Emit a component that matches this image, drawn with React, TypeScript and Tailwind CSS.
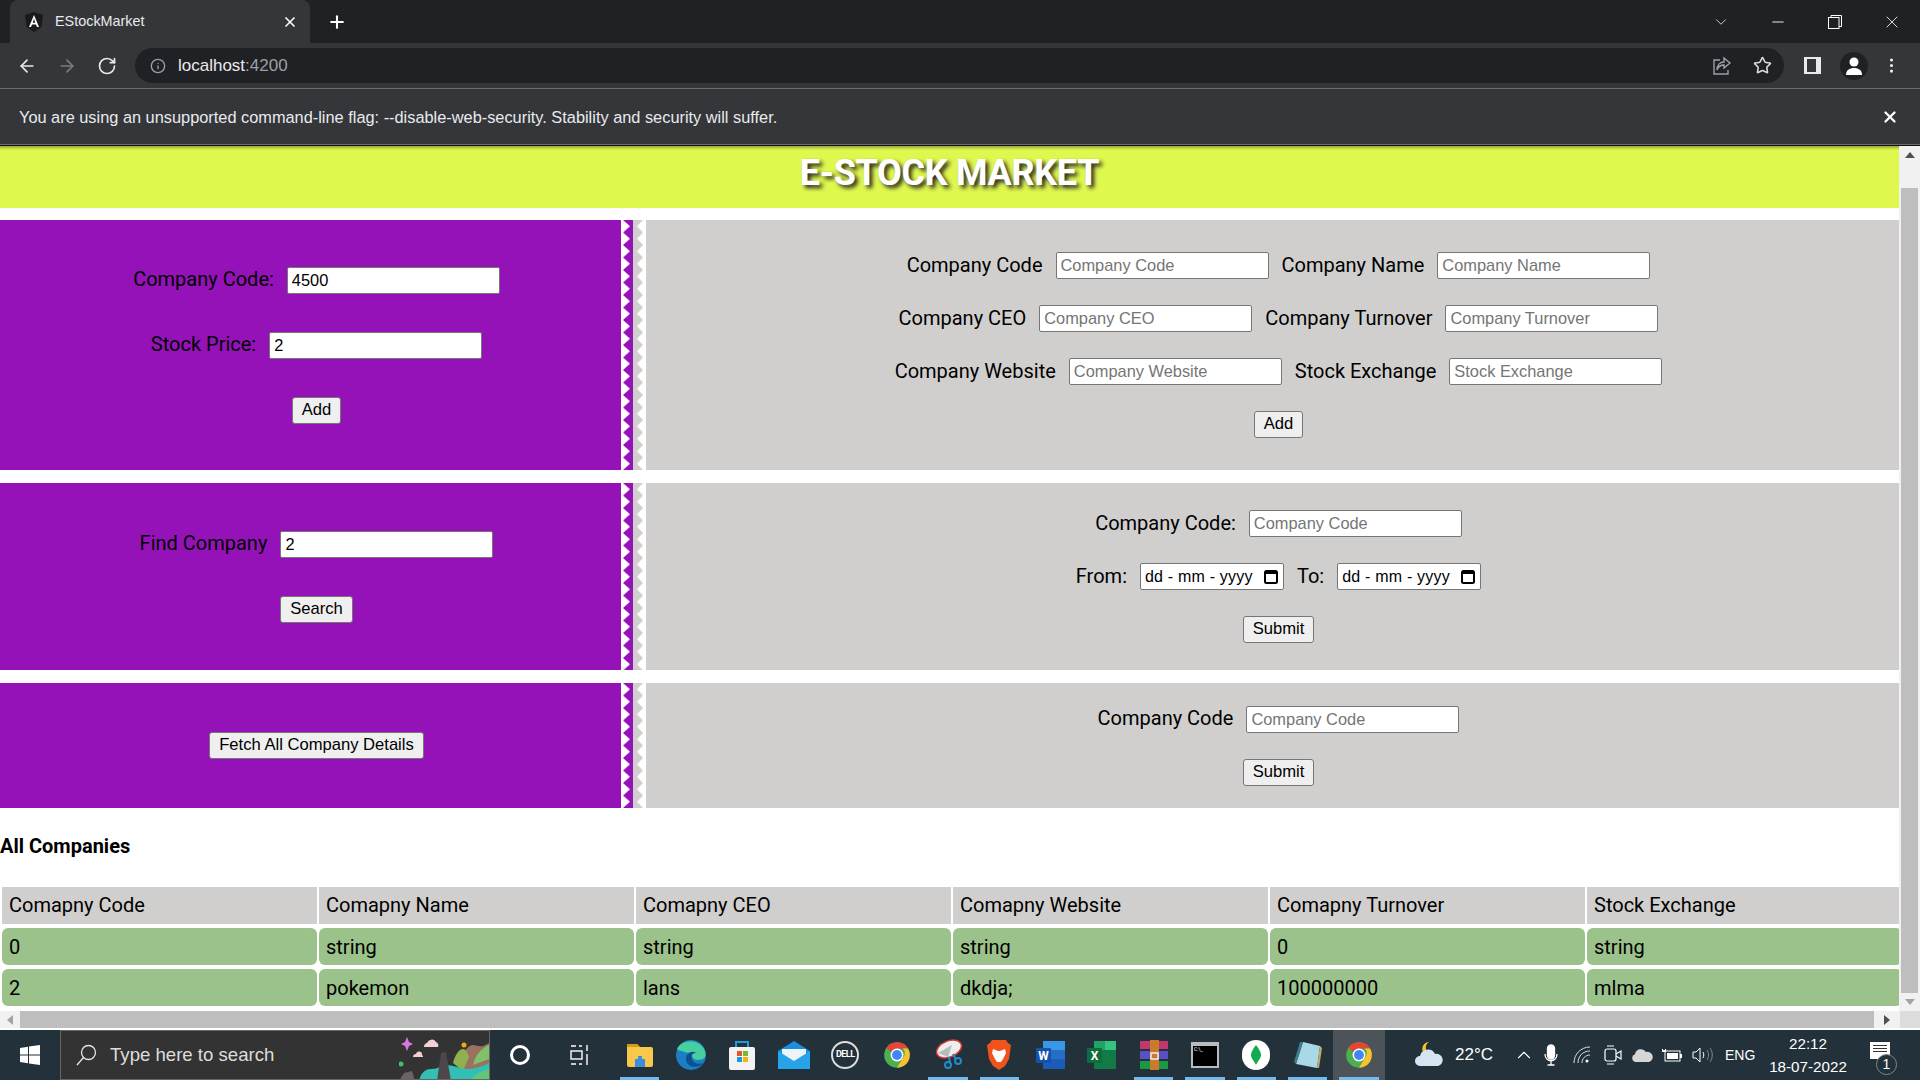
import { ReactNode } from "react";
import { ArrowLeft, ArrowRight, RotateCw, Info, Star, MoreVertical, X, Plus, ChevronDown, ChevronUp, Minus } from "lucide-react";

const sans = "font-['Liberation_Sans',sans-serif]";

const Label = ({ children }: { children: ReactNode }) => (
  <span className="text-[20px] leading-[26px] pb-[2px] text-black whitespace-nowrap">{children}</span>
);

const Field = ({ value, placeholder }: { value?: string; placeholder?: string }) => (
  <input
    readOnly
    value={value ?? ""}
    placeholder={placeholder}
    className={`${sans} w-[213px] h-[27px] bg-white border border-[#767676] rounded-[2px] px-[4px] text-[16.4px] text-black placeholder:text-[#757575] outline-none`}
  />
);

const Btn = ({ children }: { children: ReactNode }) => (
  <button className={`${sans} h-[27px] px-[9px] bg-[#efefef] border border-[#767676] rounded-[3px] text-[16.6px] text-black leading-none`}>
    {children}
  </button>
);

const DateField = () => (
  <div className={`${sans} w-[144px] h-[27px] bg-white border border-[#767676] rounded-[2px] pl-[4px] pr-[5px] flex items-center justify-between text-[16px] text-black`}>
    <span className="whitespace-pre tracking-[0.2px]">dd - mm - yyyy</span>
    <svg width="14" height="15" viewBox="0 0 14 15" fill="none">
      <rect x="1" y="2" width="12" height="12" rx="1.5" stroke="#000" strokeWidth="2" />
      <rect x="1" y="2" width="12" height="3" fill="#000" />
    </svg>
  </div>
);

const Row = ({ children }: { children: ReactNode }) => (
  <div className="flex items-center justify-center gap-[13px] h-[27px]">{children}</div>
);

// the purple / grey saw tooth strip between the two halves of a section
const Zigzag = () => (
  <svg className="w-[25px] h-full shrink-0 block" width="25" height="100%">
    <defs>
      <pattern id="saw" width="25" height="12.5" patternUnits="userSpaceOnUse">
        <polygon points="2,0 9,6.25 2,12.5 12,12.5 12,0" fill="#9512b8" />
        <polygon points="12,0 22,0 16,6.25 22,12.5 12,12.5" fill="#d0cfcd" />
      </pattern>
    </defs>
    <rect width="25" height="100%" fill="url(#saw)" />
  </svg>
);

const Section = ({ height, left, right }: { height: string; left: ReactNode; right: ReactNode }) => (
  <div className={`flex ${height}`}>
    <div className="w-[621px] bg-[#9512b8] pl-[12px] flex flex-col items-center justify-center gap-[38px]">{left}</div>
    <Zigzag />
    <div className="flex-1 bg-[#d0cfcd] pl-[12px] flex flex-col items-center justify-center gap-[26px]">{right}</div>
  </div>
);

const columns = ["Comapny Code", "Comapny Name", "Comapny CEO", "Comapny Website", "Comapny Turnover", "Stock Exchange"];
const rows = [
  ["0", "string", "string", "string", "0", "string"],
  ["2", "pokemon", "lans", "dkdja;", "100000000", "mlma"],
];

const Tray = ({ x, children }: { x: string; children: ReactNode }) => (
  <div className={`flex items-center justify-center h-full ${x}`}>{children}</div>
);

const TaskIcon = ({ children, open, active }: { children: ReactNode; open?: boolean; active?: boolean }) => (
  <div className={`relative w-[51.4px] shrink-0 h-full flex items-center justify-center ${active ? "bg-[#4d5459]" : ""}`}>
    {children}
    {open && <div className="absolute bottom-0 left-[6px] right-[6px] h-[3px] bg-[#76b9ed]" />}
  </div>
);

const Chrome = () => (
  <svg width="28" height="28" viewBox="0 0 48 48">
    <circle cx="24" cy="24" r="22" fill="#4caf50" />
    <path d="M24 2a22 22 0 0 1 19 11H24a11 11 0 0 0-10 6L6 12A22 22 0 0 1 24 2z" fill="#ea4335" />
    <path d="M43 13a22 22 0 0 1-19 33l10-17a11 11 0 0 0 0-16z" fill="#fbc02d" />
    <circle cx="24" cy="24" r="11" fill="#fff" />
    <circle cx="24" cy="24" r="8.5" fill="#4285f4" />
  </svg>
);

export default function App() {
  return (
    <div className="w-[1920px] h-screen overflow-hidden flex flex-col bg-white font-[Roboto,sans-serif]">
      {/* tab strip */}
      <div className="h-[43px] bg-[#202124] flex items-end text-white shrink-0">
        <div className="ml-[10px] w-[300px] h-[43px] bg-[#35363a] rounded-t-[8px] flex items-center pl-[15px] pr-[12px]">
          <svg width="18" height="20" viewBox="0 0 18 20" className="shrink-0">
            <path d="M9 0 L18 3 L16.5 15 L9 20 L1.5 15 L0 3 Z" fill="#1a1a1e" />
            <path d="M9 3 L14 15 H12 L11 12.5 H7 L6 15 H4 Z M9 7 L7.7 10.8 H10.3 Z" fill="#fff" />
          </svg>
          <span className={`${sans} ml-[12px] text-[14.4px] text-[#e8eaed] flex-1`}>EStockMarket</span>
          <X size={16} strokeWidth={2.5} />
        </div>
        <div className="h-[43px] flex items-center ml-[17px]">
          <Plus size={20} strokeWidth={2.5} />
        </div>
        <div className="flex-1" />
        <div className="h-[43px] flex items-center">
          <div className="w-[57px] flex justify-center"><ChevronDown size={18} strokeWidth={1} /></div>
          <div className="w-[57px] flex justify-center"><Minus size={18} strokeWidth={1.2} /></div>
          <div className="w-[57px] flex justify-center">
            <svg width="14" height="14" viewBox="0 0 14 14" fill="none" stroke="#fff">
              <rect x="0.5" y="2.5" width="10.5" height="11" />
              <path d="M3 2.5V.5h10.5v11H11" />
            </svg>
          </div>
          <div className="w-[57px] flex justify-center"><X size={20} strokeWidth={1} /></div>
        </div>
      </div>

      {/* toolbar */}
      <div className="h-[46px] bg-[#35363a] flex items-center border-b border-[#6b6c70] text-white shrink-0">
        <div className="w-[135px] flex items-center pl-[17px] gap-[20px]">
          <ArrowLeft size={20} className="text-[#e8eaed]" />
          <ArrowRight size={20} className="text-[#7a7c80]" />
          <RotateCw size={20} className="text-[#e8eaed]" />
        </div>
        <div className="w-[1649px] h-[35px] rounded-full bg-[#202124] flex items-center pl-[15px] pr-[12px]">
          <Info size={16} className="text-[#9aa0a6]" />
          <span className={`${sans} ml-[12px] text-[17px]`}>
            <span className="text-[#e8eaed]">localhost</span>
            <span className="text-[#9aa0a6]">:4200</span>
          </span>
          <div className="flex-1" />
          <svg width="20" height="20" viewBox="0 0 20 20" fill="none" stroke="#9aa0a6" strokeWidth="1.4" className="mr-[21px]">
            <path d="M8 4H2v14h14v-4" />
            <path d="M12 2l6 5-6 5V9c-4 0-6 2-7 5 0-5 3-8 7-8z" />
          </svg>
          <Star size={19} className="text-[#dadce0]" />
        </div>
        <div className="flex-1 flex items-center pl-[20px]">
          <div className="w-[17px] h-[17px] border-[2px] border-l-[3px] border-r-[5px] border-[#e8eaed]" />
          <div className="ml-[19px] w-[28px] h-[28px] rounded-full bg-[#202124] flex items-center justify-center">
            <svg width="18" height="20" viewBox="0 0 18 20" fill="#fff">
              <circle cx="9" cy="6" r="4.5" />
              <path d="M1 19c0-5 3.5-7 8-7s8 2 8 7z" />
            </svg>
          </div>
          <MoreVertical size={19} className="text-[#e8eaed] ml-[14px]" />
        </div>
      </div>

      {/* infobar */}
      <div className="h-[56px] bg-[#35363a] border-b border-[#6b6c70] flex items-center justify-between pl-[19px] pr-[21px] text-white shrink-0">
        <span className={`${sans} pt-[2px] text-[16.35px] text-[#e8eaed]`}>
          You are using an unsupported command-line flag: --disable-web-security. Stability and security will suffer.
        </span>
        <X size={18} strokeWidth={3} />
      </div>

      {/* page */}
      <div className="flex-1 min-h-0 flex flex-col border-t border-[#111]">
        <div className="flex-1 min-h-0 flex">
          <div className="w-[1899px] flex flex-col overflow-hidden">
            <div className="h-[62px] shrink-0 bg-[#e0f84e] shadow-[inset_0_5px_3px_-3px_#9aa83a] flex items-center justify-center -mb-[1px]">
              <h1 className="text-[36px] font-bold text-white [text-shadow:3px_3px_4px_#222] -mt-[9px] tracking-[-0.3px]">E-STOCK MARKET</h1>
            </div>
            <div className="mt-[13px] flex flex-col gap-[13px]">
              <Section
                height="h-[250px]"
                left={
                  <>
                    <Row><Label>Company Code:</Label><Field value="4500" /></Row>
                    <Row><Label>Stock Price:</Label><Field value="2" /></Row>
                    <Btn>Add</Btn>
                  </>
                }
                right={
                  <>
                    <Row>
                      <Label>Company Code</Label><Field placeholder="Company Code" />
                      <Label>Company Name</Label><Field placeholder="Company Name" />
                    </Row>
                    <Row>
                      <Label>Company CEO</Label><Field placeholder="Company CEO" />
                      <Label>Company Turnover</Label><Field placeholder="Company Turnover" />
                    </Row>
                    <Row>
                      <Label>Company Website</Label><Field placeholder="Company Website" />
                      <Label>Stock Exchange</Label><Field placeholder="Stock Exchange" />
                    </Row>
                    <Btn>Add</Btn>
                  </>
                }
              />
              <Section
                height="h-[187px]"
                left={
                  <>
                    <Row><Label>Find Company</Label><Field value="2" /></Row>
                    <Btn>Search</Btn>
                  </>
                }
                right={
                  <>
                    <Row><Label>Company Code:</Label><Field placeholder="Company Code" /></Row>
                    <Row><Label>From:</Label><DateField /><Label>To:</Label><DateField /></Row>
                    <Btn>Submit</Btn>
                  </>
                }
              />
              <Section
                height="h-[125px]"
                left={<Btn>Fetch All Company Details</Btn>}
                right={
                  <>
                    <Row><Label>Company Code</Label><Field placeholder="Company Code" /></Row>
                    <Btn>Submit</Btn>
                  </>
                }
              />
            </div>
            <h2 className="mt-[27px] text-[20px] leading-[22px] font-bold text-black">All Companies</h2>
            <div className="mt-[30px] pl-[2px] flex flex-col gap-[4px]">
              <div className="grid grid-cols-[repeat(6,315px)] gap-[2px]">
                {columns.map((c) => (
                  <div key={c} className="h-[37px] bg-[#d0cfcd] pl-[7px] pb-[1px] flex items-center text-[20px] text-black">{c}</div>
                ))}
              </div>
              {rows.map((r) => (
                <div key={r[1]} className="grid grid-cols-[repeat(6,315px)] gap-[2px]">
                  {r.map((v, i) => (
                    <div key={i} className="h-[37px] bg-[#9bc28a] rounded-[6px] pl-[7px] flex items-center text-[20px] text-black">{v}</div>
                  ))}
                </div>
              ))}
            </div>
          </div>
          {/* vertical scrollbar */}
          <div className="w-[21px] bg-[#f1f1f1] flex flex-col items-center pt-[6px] pb-[6px] justify-between relative">
            <div className="w-0 h-0 border-x-[5px] border-x-transparent border-b-[6px] border-b-[#505050]" />
            <div className="absolute top-[42px] bottom-[18px] left-[2px] right-[2px] bg-[#bebebe]" />
            <div className="w-0 h-0 border-x-[5px] border-x-transparent border-t-[6px] border-t-[#a3a3a3]" />
          </div>
        </div>
        {/* horizontal scrollbar */}
        <div className="h-[17px] flex bg-[#f1f1f1] shrink-0">
          <div className="w-[20px] flex items-center justify-center">
            <div className="w-0 h-0 border-y-[5px] border-y-transparent border-r-[6px] border-r-[#a3a3a3]" />
          </div>
          <div className="w-[1854px] bg-[#bebebe]" />
          <div className="w-[26px] flex items-center justify-center">
            <div className="w-0 h-0 border-y-[5px] border-y-transparent border-l-[6px] border-l-[#505050]" />
          </div>
          <div className="w-[20px] bg-[#dcdcdc]" />
        </div>
        <div className="h-[2px] bg-white shrink-0" />
      </div>

      {/* windows taskbar */}
      <div className="h-[50px] bg-[#22313a] flex items-center shrink-0 text-white">
        <div className="w-[60px] flex justify-center">
          <svg width="20" height="20" viewBox="0 0 20 20" fill="#fff">
            <path d="M0 3l8-1.2V9.500H0zM9 1.600L20 0v9.500H9zM0 10.500h8v7.700L0 17zM9 10.500h11V20L9 18.400z" />
          </svg>
        </div>
        <div className="relative w-[430px] h-[50px] bg-[#333] border border-[#666] flex items-center pl-[14px] overflow-hidden">
          <svg width="22" height="22" viewBox="0 0 22 22" fill="none" stroke="#e6e6e6" strokeWidth="1.3">
            <circle cx="13.5" cy="8.500" r="7" />
            <path d="M8.500 13.500L2 21" />
          </svg>
          <span className={`${sans} ml-[13px] text-[18.6px] text-[#ddd]`}>Type here to search</span>
          <svg width="90" height="50" viewBox="0 0 90 50" className="absolute right-0 top-0">
            <path d="M60 38c0-12 8-24 14-24 4 0 8 4 16-2v30z" fill="#9a7260" />
            <path d="M54 32c2-8 6-14 10-14 3 0 4 3 6 8l-6 14z" fill="#8fb04e" />
            <path d="M74 34c2-10 8-16 16-20v14z" fill="#7fc26b" />
            <path d="M20 50c2-8 6-12 12-12 8 0 10-4 16-4s14 4 20 4 14-2 22-6v18z" fill="#33bfb4" />
            <path d="M70 50c6-6 12-10 20-12v12z" fill="#5fc77a" />
            <path d="M38 50l4-28 5-1 5 29z" fill="#4d474b" />
            <path d="M0 50l5-8 8-2 3 10z" fill="#6f6263" />
            <path d="M25 16a4 4 0 0 1 3-4 5 5 0 0 1 9-1 4 4 0 0 1 2 5z" fill="#f3d0d5" />
            <path d="M14 26a3 3 0 0 1 3-3 3 3 0 0 1 6 1 2 2 0 0 1 1 2z" fill="#f3d0d5" />
            <path d="M8 6l2 5 4 2-4 2-2 5-2-5-4-2 4-2z" fill="#d977e8" />
            <circle cx="65" cy="14" r="2.500" fill="#f2a71b" />
            <circle cx="2" cy="33" r="2.500" fill="#3bc46a" />
          </svg>
        </div>
        <div className="w-[60px] flex justify-center">
          <div className="w-[20px] h-[20px] rounded-full border-[3px] border-white" />
        </div>
        <div className="w-[60px] flex justify-center">
          <svg width="22" height="22" viewBox="0 0 22 22" fill="none" stroke="#fff" strokeWidth="1.4">
            <path d="M2 2h5M10 2h3M2 20h5M10 20h3" />
            <rect x="2" y="7" width="11" height="8" />
            <path d="M18 1v6M18 10v11" />
          </svg>
        </div>
        <div className="flex w-[772px] shrink-0 h-full ml-[4px]">
          <TaskIcon open>
            <svg width="28" height="28" viewBox="0 0 28 28">
              <path d="M1 5a2 2 0 0 1 2-2h8l3 3h11a2 2 0 0 1 2 2v16a2 2 0 0 1-2 2H3a2 2 0 0 1-2-2z" fill="#f9c84a" />
              <path d="M1 3h10l3 3H1z" fill="#d79a1f" />
              <path d="M9 18h10v8H9z" fill="#3b8fd8" />
              <path d="M12 15h4v4h-4z" fill="#3b8fd8" />
            </svg>
          </TaskIcon>
          <TaskIcon>
            <svg width="32" height="32" viewBox="0 0 32 32">
              <circle cx="16" cy="16" r="15" fill="#1b7fc4" />
              <path d="M2 10C6 1 24-2 30 12c2 7-2 9-7 9-6 0-5-4-8-6-5-3-9-2-13-5z" fill="#46cfa0" />
              <path d="M11 20c0-6 6-9 10-6-4 0-5 3-4 6 1 4 6 6 11 4-4 6-17 5-17-4z" fill="#0c4f92" />
            </svg>
          </TaskIcon>
          <TaskIcon>
            <svg width="28" height="32" viewBox="0 0 28 32">
              <rect x="1" y="8" width="26" height="23" rx="2" fill="#f3f3f3" />
              <path d="M8 8V3h12v5" fill="none" stroke="#1e9ad6" strokeWidth="2" />
              <rect x="9" y="12" width="5" height="5" fill="#e8552e" />
              <rect x="15" y="12" width="5" height="5" fill="#7ab92f" />
              <rect x="9" y="18" width="5" height="5" fill="#1e9ad6" />
              <rect x="15" y="18" width="5" height="5" fill="#f2b50d" />
            </svg>
          </TaskIcon>
          <TaskIcon>
            <svg width="32" height="28" viewBox="0 0 32 28">
              <path d="M0 10L16 0l16 10v18H0z" fill="#1a8fe0" />
              <path d="M4 8h24v10l-12 5-12-5z" fill="#eef3f7" />
              <path d="M0 10l16 10 16-10v18H0z" fill="#27a3ea" />
            </svg>
          </TaskIcon>
          <TaskIcon>
            <div className="w-[28px] h-[28px] rounded-full border-[2px] border-[#ddd] flex items-center justify-center text-[9px] font-bold tracking-[-0.5px]">DELL</div>
          </TaskIcon>
          <TaskIcon><Chrome /></TaskIcon>
          <TaskIcon open>
            <svg width="30" height="32" viewBox="0 0 30 32" fill="none">
              <ellipse cx="16" cy="10" rx="13" ry="8" fill="#eee" stroke="#d9383a" strokeWidth="1.500" transform="rotate(-22 16 10)" />
              <path d="M5 14l10 4 4-12" fill="#bbb" />
              <circle cx="15" cy="26" r="3" stroke="#1e8dc9" strokeWidth="2" />
              <circle cx="25" cy="22" r="3" stroke="#1e8dc9" strokeWidth="2" />
              <path d="M16 18l1 6M20 15l3 6" stroke="#1e8dc9" strokeWidth="2" />
            </svg>
          </TaskIcon>
          <TaskIcon open>
            <svg width="26" height="32" viewBox="0 0 26 32">
              <path d="M6 1h14l2 3 3 2-2 14-4 7-6 4-6-4-4-7L1 6l3-2z" fill="#f1531f" />
              <path d="M7 10l5 2h2l5-2 1 4-3 6-2 3h-4l-2-3-3-6z" fill="#fff" />
            </svg>
          </TaskIcon>
          <TaskIcon>
            <svg width="30" height="30" viewBox="0 0 30 30">
              <rect x="7" y="1" width="22" height="28" rx="1" fill="#1a5cb8" />
              <rect x="7" y="1" width="22" height="9" fill="#3a97e8" />
              <rect x="7" y="10" width="22" height="9" fill="#2470c9" />
              <rect x="0" y="8" width="15" height="15" rx="1" fill="#1552ad" />
              <text x="7.500" y="20" fontSize="12" fontWeight="bold" fill="#fff" textAnchor="middle">W</text>
            </svg>
          </TaskIcon>
          <TaskIcon>
            <svg width="30" height="30" viewBox="0 0 30 30">
              <rect x="7" y="1" width="22" height="28" rx="1" fill="#127a46" />
              <rect x="18" y="1" width="11" height="9" fill="#33c481" />
              <rect x="7" y="1" width="11" height="9" fill="#21a366" />
              <rect x="0" y="8" width="15" height="15" rx="1" fill="#0f6c3c" />
              <text x="7.500" y="20" fontSize="12" fontWeight="bold" fill="#fff" textAnchor="middle">X</text>
            </svg>
          </TaskIcon>
          <TaskIcon open>
            <svg width="30" height="30" viewBox="0 0 30 30">
              <rect x="1" y="1" width="28" height="8" fill="#c2386e" />
              <rect x="1" y="11" width="28" height="8" fill="#5a4fc4" />
              <rect x="1" y="21" width="28" height="8" fill="#189a44" />
              <rect x="11" y="0" width="9" height="30" fill="#c97a2a" />
              <rect x="12" y="13" width="7" height="6" fill="none" stroke="#eee" strokeWidth="1.500" />
            </svg>
          </TaskIcon>
          <TaskIcon open>
            <div className="w-[28px] h-[26px] bg-black border-[2px] border-[#b8bcc0] border-t-[4px] text-[5px] leading-[6px] text-white pl-[1px]">C:\_</div>
          </TaskIcon>
          <TaskIcon open>
            <div className="w-[28px] h-[30px] rounded-full bg-white flex items-center justify-center">
              <svg width="10" height="20" viewBox="0 0 10 20"><path d="M5 0c3 4 5 7 5 10s-3 6-5 10c-2-4-5-7-5-10s2-6 5-10z" fill="#13aa52" /></svg>
            </div>
          </TaskIcon>
          <TaskIcon open>
            <svg width="28" height="30" viewBox="0 0 28 30">
              <path d="M9 2l17 4-3 22L2 24z" fill="#a9d9e6" />
              <path d="M2 24L9 2 6 2 0 22z" fill="#3f7d8f" />
              <path d="M26 6l2 2-3 20-2 0z" fill="#c8a868" />
            </svg>
          </TaskIcon>
          <TaskIcon open active><Chrome /></TaskIcon>
        </div>
        <div className="flex-1" />
        {/* tray */}
        <div className="flex h-full items-center w-[534px] shrink-0 relative">
          <Tray x="w-[69px] pl-[16px]">
            <svg width="28" height="26" viewBox="0 0 28 26">
              <path d="M14 0a7 7 0 1 0 6 11 6 6 0 0 1-6-11z" fill="#f5c427" />
              <path d="M5 24a5 5 0 0 1 0-10 8 8 0 0 1 15-2 6 6 0 0 1 3 12z" fill="#d4e4f2" />
            </svg>
          </Tray>
          <span className={`${sans} text-[17px] w-[50px]`}>22°C</span>
          <Tray x="w-[31px] pl-[6px]"><ChevronUp size={22} strokeWidth={1.2} /></Tray>
          <Tray x="w-[29px]">
            <svg width="14" height="22" viewBox="0 0 14 22" fill="none" stroke="#fff" strokeWidth="1.3">
              <rect x="3.500" y="1" width="7" height="14" rx="3.500" fill="#fff" />
              <path d="M1 10c0 9 12 9 12 0M7 17v4M3.500 21h7" />
            </svg>
          </Tray>
          <Tray x="w-[33px]">
            <svg width="18" height="18" viewBox="0 0 18 18" fill="none" stroke="#ddd" strokeWidth="1">
              <path d="M1 17C1 8 8 1 17 1M5 17c0-7 5-12 12-12M9 17c0-4 3-8 8-8" />
              <circle cx="14" cy="15" r="1.500" fill="#fff" stroke="none" />
            </svg>
          </Tray>
          <Tray x="w-[29px]">
            <svg width="20" height="20" viewBox="0 0 20 20" fill="none" stroke="#fff" strokeWidth="1.2">
              <rect x="2" y="4" width="11" height="12" rx="2" />
              <path d="M13 9l5-3v8l-5-3M4 1h7M4 19h7" />
            </svg>
          </Tray>
          <Tray x="w-[30px]">
            <svg width="21" height="13" viewBox="0 0 21 13" fill="#d6d6d6">
              <path d="M4 13a4 4 0 0 1-1-7.800A6 6 0 0 1 14 3a4.500 4.500 0 0 1 3 10z" />
            </svg>
          </Tray>
          <Tray x="w-[30px]">
            <svg width="20" height="14" viewBox="0 0 20 14" fill="#fff">
              <rect x="3" y="3" width="15" height="10" fill="none" stroke="#fff" />
              <rect x="5" y="5" width="11" height="6" />
              <rect x="18" y="6" width="2" height="4" />
              <path d="M0 4h4V1h-1v1H1V1H0z" />
            </svg>
          </Tray>
          <Tray x="w-[30px]">
            <svg width="21" height="16" viewBox="0 0 21 16" fill="none" stroke="#fff" strokeWidth="1">
              <path d="M1 5h3l4-4v14l-4-4H1z" />
              <path d="M11 5c1 2 1 4 0 6" />
              <path d="M15 3c2 3 2 7 0 10M18 1c3 4 3 10 0 14" stroke="#888" />
            </svg>
          </Tray>
          <span className={`${sans} text-[14px] ml-[8px] w-[46px]`}>ENG</span>
          <div className={`${sans} w-[84px] text-center text-[15.2px] leading-[23px] -ml-[5px]`}>
            <div>22:12</div>
            <div>18-07-2022</div>
          </div>
          <div className="absolute right-[30px] top-[12px] w-[20px] h-[17px] bg-white flex flex-col gap-[2px] px-[3px] pt-[3px]">
            <div className="h-[1px] bg-[#333]" /><div className="h-[1px] bg-[#333]" /><div className="h-[1px] bg-[#333]" />
          </div>
          <div className={`${sans} absolute right-[23px] top-[24px] w-[21px] h-[21px] rounded-full bg-[#22313a] border border-[#888] flex items-center justify-center text-[14px]`}>1</div>
        </div>
      </div>
    </div>
  );
}
